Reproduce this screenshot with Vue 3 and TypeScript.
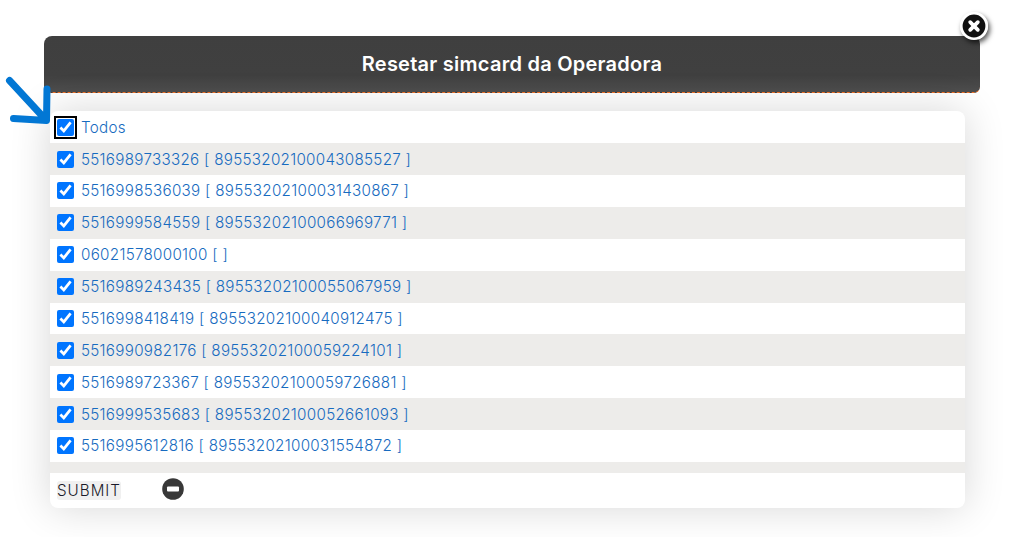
<template>
  <div class="page">
    <section class="modal">
      <!-- Close button -->
      <a href="#" class="close" @click.prevent>
        <svg width="28" height="28" viewBox="0 0 28 28">
          <circle cx="14" cy="14" r="12.7" fill="#111" stroke="#fff" stroke-width="2.6" />
          <path d="M10.2 10.2l7.6 7.6M17.8 10.2l-7.6 7.6" stroke="#fff" stroke-width="3.8" stroke-linecap="round" />
        </svg>
      </a>

      <header class="modal-title">Resetar simcard da Operadora</header>

      <!-- Arrow drawn on top of the screenshot -->
      <svg class="arrow" width="52" height="52" viewBox="0 0 52 52">
        <path
          d="M6.5 6.5L43 46M44 15L43.5 46.5L10.5 44.5"
          fill="none"
          stroke="#0277d4"
          stroke-width="7"
          stroke-linecap="round"
          stroke-linejoin="round"
        />
      </svg>

      <form class="panel" @submit.prevent>
        <div class="list">
          <label class="row">
            <input v-model="all" class="check focused" type="checkbox" />
            <span>Todos</span>
          </label>
          <label v-for="item in simcards" :key="item.phone" class="row">
            <input v-model="item.checked" class="check" type="checkbox" />
            <span>{{ item.phone }} [ {{ item.iccid }} ]</span>
          </label>
          <!-- Next row is scrolled out of view -->
          <div class="row"></div>
        </div>
        <div class="actions">
          <button class="submit" type="submit">SUBMIT</button>
          <svg class="minus" width="22" height="22" viewBox="0 0 22 22">
            <circle cx="11" cy="11" r="10.8" fill="#383838" />
            <rect x="5" y="8.6" width="12" height="4.8" rx="1" fill="#fff" />
          </svg>
        </div>
      </form>
    </section>
  </div>
</template>

<script setup lang="ts">
import { ref } from 'vue'

const all = ref(true)

const simcards = ref([
  { phone: '5516989733326', iccid: '89553202100043085527', checked: true },
  { phone: '5516998536039', iccid: '89553202100031430867', checked: true },
  { phone: '5516999584559', iccid: '89553202100066969771', checked: true },
  { phone: '06021578000100', iccid: '', checked: true },
  { phone: '5516989243435', iccid: '89553202100055067959', checked: true },
  { phone: '5516998418419', iccid: '89553202100040912475', checked: true },
  { phone: '5516990982176', iccid: '89553202100059224101', checked: true },
  { phone: '5516989723367', iccid: '89553202100059726881', checked: true },
  { phone: '5516999535683', iccid: '89553202100052661093', checked: true },
  { phone: '5516995612816', iccid: '89553202100031554872', checked: true }
])
</script>

<style>
html,
body {
  background: #fff;
}
</style>

<style scoped>
.page {
  height: 537px;
  overflow: hidden;
  padding: 36px 42px 0 44px;
  box-sizing: border-box;
  font-family: Inter, 'Open Sans', sans-serif;
}

.modal {
  position: relative;
  width: 936px;
}

.modal-title {
  height: 57px;
  line-height: 57px;
  box-sizing: border-box;
  text-align: center;
  color: #fff;
  font-size: 20px;
  font-weight: 600;
  letter-spacing: 0.25px;
  border-radius: 8px 8px 6px 6px;
  border-bottom: 1px dashed #f0732a;
  background: linear-gradient(to bottom, #3f3f3f 0%, #404040 70%, #4e4e4e 100%);
}

.close {
  position: absolute;
  top: -24px;
  right: -8px;
  width: 28px;
  height: 28px;
  border-radius: 50%;
  box-shadow: 2px 3px 5px rgba(0, 0, 0, 0.65);
}

.close svg,
.minus {
  display: block;
}

.arrow {
  position: absolute;
  left: -41px;
  top: 38px;
  z-index: 2;
}

.panel {
  width: 915px;
  margin: 18.3px 0 0 6px;
  background: #fff;
  border-radius: 8px;
  overflow: hidden;
  box-shadow: 0 0 40px rgba(0, 0, 0, 0.16);
}

.list {
  height: 361.7px;
  overflow: hidden;
}

.row {
  display: flex;
  align-items: center;
  gap: 7px;
  height: 31.89px;
  padding-left: 7px;
  color: #176bc0;
  font-size: 15.2px;
  font-weight: 300;
  letter-spacing: 0.29px;
}

.row:nth-child(even) {
  background: #edecea;
}

.check {
  width: 17px;
  height: 17px;
  margin: 0;
  accent-color: #0075ff;
}

.check.focused {
  outline: 2px solid #000;
  outline-offset: 1px;
  border-radius: 3px;
}

.actions {
  display: flex;
  align-items: center;
  height: 35px;
  padding: 1px 0 0 7px;
  box-sizing: border-box;
}

.submit {
  padding: 0;
  border: 0;
  border-radius: 3px;
  background: #f0f0f0;
  color: #1a1a2a;
  font: inherit;
  font-size: 15.2px;
  font-weight: 300;
  letter-spacing: 1px;
}

.minus {
  margin: -4px 0 0 41px;
}
</style>
